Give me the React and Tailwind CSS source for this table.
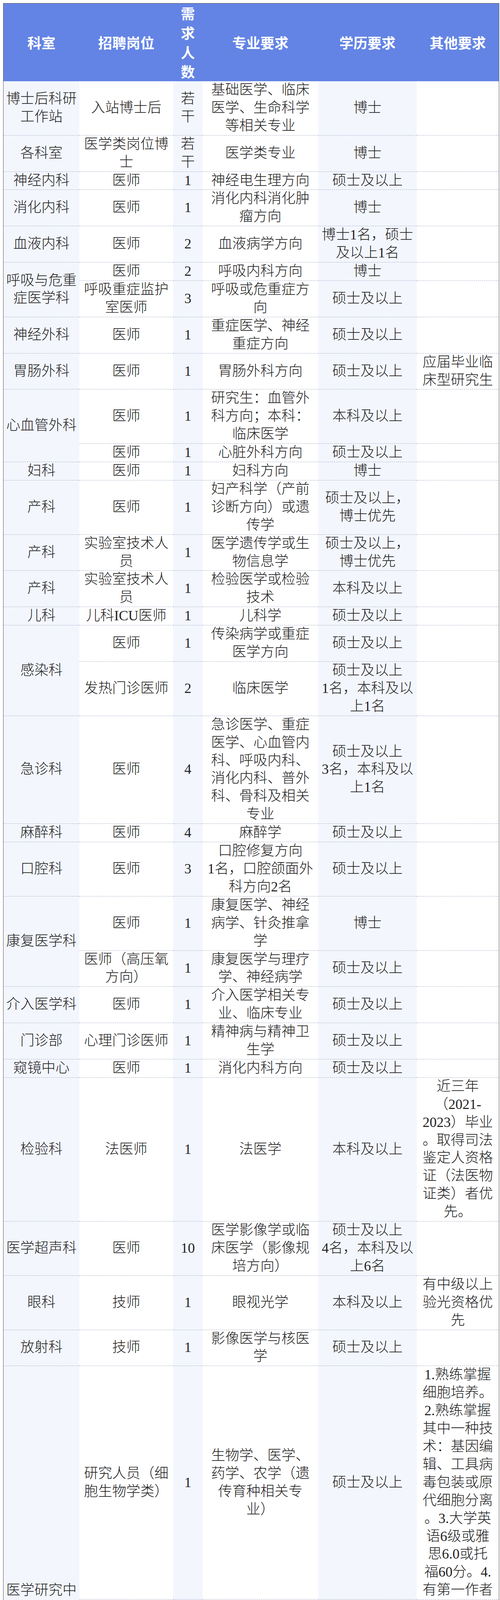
// Recruitment table: one row per entry, "|" marks a line break inside a cell.
// A cell of null is covered by the rowspan of the department cell above it.

const rows = [
  { span: 1, cells: ["博士后科研|工作站", "入站博士后", "若|干", "基础医学、临床|医学、生命科学|等相关专业", "博士", ""] },
  { span: 1, cells: ["各科室", "医学类岗位博|士", "若|干", "医学类专业", "博士", ""] },
  { span: 1, cells: ["神经内科", "医师", "1", "神经电生理方向", "硕士及以上", ""] },
  { span: 1, cells: ["消化内科", "医师", "1", "消化内科消化肿|瘤方向", "博士", ""] },
  { span: 1, cells: ["血液内科", "医师", "2", "血液病学方向", "博士1名，硕士|及以上1名", ""] },
  { span: 2, cells: ["呼吸与危重|症医学科", "医师", "2", "呼吸内科方向", "博士", ""] },
  { cells: [null, "呼吸重症监护|室医师", "3", "呼吸或危重症方|向", "硕士及以上", ""] },
  { span: 1, cells: ["神经外科", "医师", "1", "重症医学、神经|重症方向", "硕士及以上", ""] },
  { span: 1, cells: ["胃肠外科", "医师", "1", "胃肠外科方向", "硕士及以上", "应届毕业临|床型研究生"] },
  { span: 2, cells: ["心血管外科", "医师", "1", "研究生：血管外|科方向；本科：|临床医学", "本科及以上", ""] },
  { cells: [null, "医师", "1", "心脏外科方向", "硕士及以上", ""] },
  { span: 1, cells: ["妇科", "医师", "1", "妇科方向", "博士", ""] },
  { span: 1, cells: ["产科", "医师", "1", "妇产科学（产前|诊断方向）或遗|传学", "硕士及以上，|博士优先", ""] },
  { span: 1, cells: ["产科", "实验室技术人|员", "1", "医学遗传学或生|物信息学", "硕士及以上，|博士优先", ""] },
  { span: 1, cells: ["产科", "实验室技术人|员", "1", "检验医学或检验|技术", "本科及以上", ""] },
  { span: 1, cells: ["儿科", "儿科ICU医师", "1", "儿科学", "硕士及以上", ""] },
  { span: 2, cells: ["感染科", "医师", "1", "传染病学或重症|医学方向", "硕士及以上", ""] },
  { cells: [null, "发热门诊医师", "2", "临床医学", "硕士及以上|1名，本科及以|上1名", ""] },
  { span: 1, cells: ["急诊科", "医师", "4", "急诊医学、重症|医学、心血管内|科、呼吸内科、|消化内科、普外|科、骨科及相关|专业", "硕士及以上|3名，本科及以|上1名", ""] },
  { span: 1, cells: ["麻醉科", "医师", "4", "麻醉学", "硕士及以上", ""] },
  { span: 1, cells: ["口腔科", "医师", "3", "口腔修复方向|1名，口腔颌面外|科方向2名", "硕士及以上", ""] },
  { span: 2, cells: ["康复医学科", "医师", "1", "康复医学、神经|病学、针灸推拿|学", "博士", ""] },
  { cells: [null, "医师（高压氧|方向）", "1", "康复医学与理疗|学、神经病学", "硕士及以上", ""] },
  { span: 1, cells: ["介入医学科", "医师", "1", "介入医学相关专|业、临床专业", "硕士及以上", ""] },
  { span: 1, cells: ["门诊部", "心理门诊医师", "1", "精神病与精神卫|生学", "硕士及以上", ""] },
  { span: 1, cells: ["窥镜中心", "医师", "1", "消化内科方向", "硕士及以上", ""] },
  { span: 1, cells: ["检验科", "法医师", "1", "法医学", "本科及以上", "近三年|（2021-|2023）毕业|。取得司法|鉴定人资格|证（法医物|证类）者优|先。"] },
  { span: 1, cells: ["医学超声科", "医师", "10", "医学影像学或临|床医学（影像规|培方向）", "硕士及以上|4名，本科及以|上6名", ""] },
  { span: 1, cells: ["眼科", "技师", "1", "眼视光学", "本科及以上", "有中级以上|验光资格优|先"] },
  { span: 1, cells: ["放射科", "技师", "1", "影像医学与核医|学", "硕士及以上", ""] },
  { span: 2, cells: ["医学研究中|心", "研究人员（细|胞生物学类）", "1", "生物学、医学、|药学、农学（遗|传育种相关专|业）", "硕士及以上", "1.熟练掌握|细胞培养。|2.熟练掌握|其中一种技|术：基因编|辑、工具病|毒包装或原|代细胞分离|。3.大学英|语6级或雅|思6.0或托|福60分。4.|有第一作者"] },
  { cells: [null, "研究人员（统|计学类）", "1", "数学（统计学相|关专业）、公共|卫生与预防医学|（统计学相关专|业）", "硕士及以上", "1.熟练掌握|临床科研相|关的统计学|方法。2.熟|练掌握R语|言。3.大学|英语6级或|雅思6.0或|托福60分。|4.有第一作|者发表的|SCI收录文|章优先。"] },
  { span: 1, cells: ["各科室", "护士", "40", "护理学", "本科及以上", ""] },
  { span: 1, cells: ["医务部", "职员/助理职|员", "1", "临床医学、中医|学", "本科及以上", ""] },
  { span: 1, cells: ["医疗质量管|理科", "统计员", "2", "公共卫生与预防|医学类", "本科及以上", ""] },
  { span: 1, cells: ["医院感染管|理科", "职员/助理职|员", "1", "卫生事业管理", "本科及以上", ""] },
  { span: 1, cells: ["网络信息科", "技术人员", "1", "大数据、人工智|能、区块链、计|算机应用技术、|软件工程、信息|安全及计算机相|关专业", "硕士及以上", ""] },
  { span: 1, cells: ["医院办公室", "职员/助理职|员", "1", "汉语言文学、文|秘、公共事业管|理、行政管理、|企业管理", "本科及以上", "中共党员优|先"] },
  { span: 1, cells: ["财务科", "职员", "1", "财务管理、会计|学", "硕士及以上", "具有法律相|关背景者优|先"] },
];

const headers = ["科室", "招聘岗位", "需|求|人|数", "专业要求", "学历要求", "其他要求"];

const Lines = ({ text }) =>
  text
    ? text.split("|").map((l, k) => (
        <span key={k} className="block">
          {l}
        </span>
      ))
    : null;

export default function App() {
  return (
    <div className="bg-white pt-[8px] pl-[8px]">
      <div className="w-[1269px] border-x border-t border-[#555]">
        <table className="w-full table-fixed border-collapse font-['Liberation_Serif','Noto_Sans_CJK_SC',serif] font-light text-[36px] text-[#222]">
          <colgroup>
            <col className="w-[194px]" />
            <col className="w-[240px]" />
            <col className="w-[75px]" />
            <col className="w-[296px]" />
            <col className="w-[252px]" />
            <col className="w-[210px]" />
          </colgroup>
          <thead>
            <tr className="bg-[#6384e4]">
              {headers.map((h, j) => (
                <th
                  key={j}
                  className="p-0 text-center align-middle whitespace-nowrap font-['Noto_Sans_CJK_SC',sans-serif] font-bold text-white leading-[49.75px]"
                >
                  <Lines text={h} />
                </th>
              ))}
            </tr>
          </thead>
          <tbody>
            {rows.map((r, i) => {
              const last = i === rows.length - 1;
              return (
                <tr key={i}>
                  {r.cells.map((c, j) =>
                    c === null ? null : (
                      <td
                        key={j}
                        rowSpan={j === 0 ? r.span : undefined}
                        className={
                          "p-0 text-center align-middle whitespace-nowrap leading-[45.9px] " +
                          (j % 2 === 0 ? "bg-[#f3f6fd] " : "bg-white ") +
                          (last ? "" : "border-b border-dashed border-[#a3acc4]")
                        }
                      >
                        <Lines text={c} />
                      </td>
                    )
                  )}
                </tr>
              );
            })}
          </tbody>
        </table>
      </div>
    </div>
  );
}
